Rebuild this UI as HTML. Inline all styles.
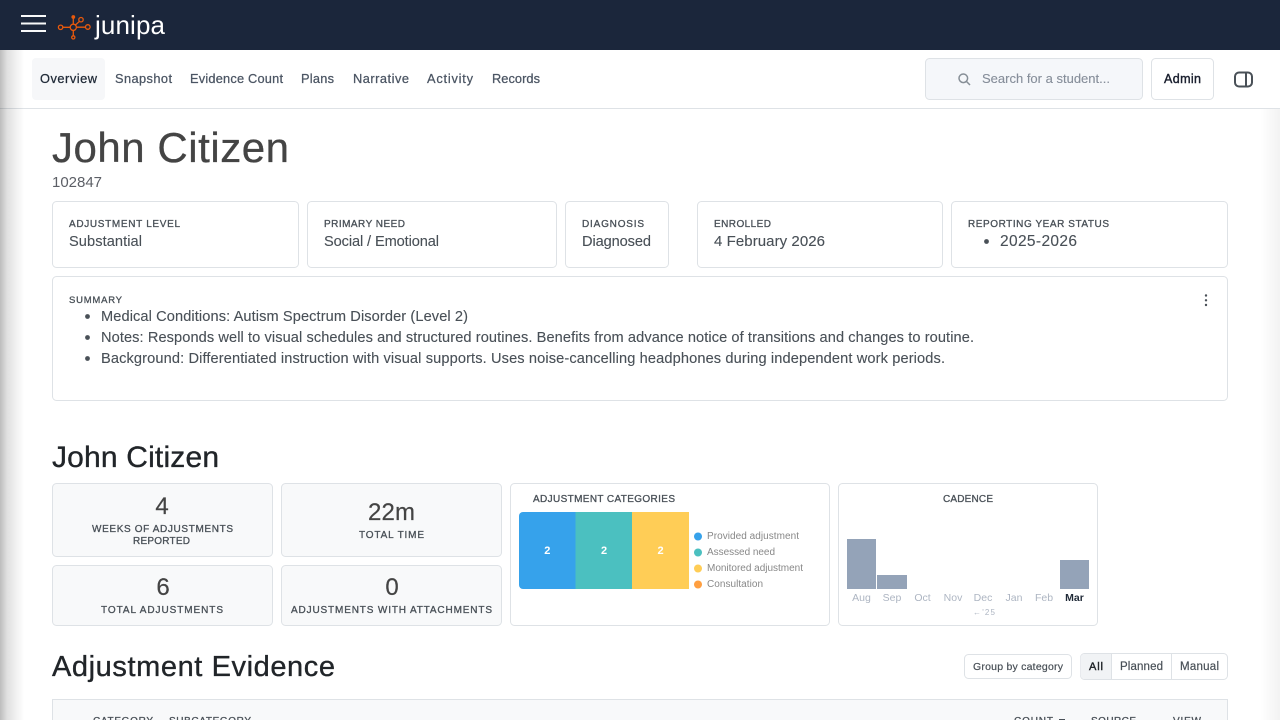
<!DOCTYPE html>
<html lang="en"><head><meta charset="utf-8"><title>John Citizen</title>
<style>
html,body{margin:0;padding:0;width:1280px;height:720px;overflow:hidden;background:#fff}
svg{display:block;font-family:"Liberation Sans",sans-serif}
.card{fill:#fff;stroke:#dee2e6;stroke-width:1}
.stat{fill:#f8f9fa;stroke:#dee2e6;stroke-width:1}
.nav{font-size:12.8px;fill:#4b5563;stroke:#4b5563;stroke-width:.25}
.lab{font-size:10px;fill:#495057;stroke:#495057;stroke-width:.3}
.val{font-size:14.6px;fill:#495057;stroke:#495057;stroke-width:.12}
.h2{font-size:30px;fill:#212529;stroke:#212529;stroke-width:.35}
.num{font-size:24px;fill:#444;stroke:#444;stroke-width:.2;text-anchor:middle}
.leg{font-size:10px;fill:#888}
.mon{font-size:10.5px;fill:#adb5c2;text-anchor:middle}
.btn{font-size:11.5px;fill:#495057;stroke:#495057;stroke-width:.2}
</style></head><body>
<svg width="1280" height="720" viewBox="0 0 1280 720" xmlns="http://www.w3.org/2000/svg">
<defs>
<linearGradient id="l" x1="0" x2="1" y1="0" y2="0"><stop offset="0" stop-color="#000" stop-opacity=".26"/><stop offset=".3" stop-color="#000" stop-opacity=".12"/><stop offset="1" stop-color="#000" stop-opacity="0"/></linearGradient>
<linearGradient id="r" x1="1" x2="0" y1="0" y2="0"><stop offset="0" stop-color="#000" stop-opacity=".05"/><stop offset="1" stop-color="#000" stop-opacity="0"/></linearGradient>
</defs>
<rect width="1280" height="720" fill="#fff"/>
<rect x="1260" y="109" width="20" height="611" fill="url(#r)"/>

<!-- header -->
<rect width="1280" height="50" fill="#1b263b"/>
<g fill="#f8f9fa"><rect x="21" y="15" width="25" height="2"/><rect x="21" y="22.500" width="25" height="2"/><rect x="21" y="30" width="25" height="2"/></g>
<g fill="none" stroke="#e8590c" stroke-width="1.300">
<circle cx="73.300" cy="27.300" r="3.100"/><circle cx="60.600" cy="27.300" r="2.200"/><circle cx="87.800" cy="27" r="2.300"/><circle cx="73.300" cy="37.400" r="1.600"/><circle cx="81" cy="19.700" r="2.200"/>
<path d="M62.800 27.300H70.200M76.400 27.200H85.500M73.300 24.200V18.500M73.300 30.400V35.800M75.400 25L79.500 21.300"/>
</g>
<circle cx="73.300" cy="17" r="1.900" fill="#e8590c"/>
<text x="95" y="34" font-size="26" fill="#fff" textLength="70">junipa</text>

<!-- nav -->
<rect y="108" width="1280" height="1" fill="#dee2e6"/>
<rect x="32" y="58" width="73" height="42" rx="4" fill="#f6f7f9"/>
<text class="nav" x="40" y="83" textLength="57" style="fill:#1f2937;stroke:#1f2937">Overview</text>
<text class="nav" x="115" y="83" textLength="57">Snapshot</text>
<text class="nav" x="190" y="83" textLength="93">Evidence Count</text>
<text class="nav" x="301" y="83" textLength="33">Plans</text>
<text class="nav" x="353" y="83" textLength="56">Narrative</text>
<text class="nav" x="427" y="83" textLength="46">Activity</text>
<text class="nav" x="492" y="83" textLength="48">Records</text>
<rect x="925.500" y="58.500" width="217" height="41" rx="4" fill="#f5f7fa" stroke="#dee2e6"/>
<g fill="none" stroke="#868e96" stroke-width="1.500"><circle cx="963.300" cy="78.300" r="4.300"/><path d="M966.500 81.500L970 85"/></g>
<text x="982" y="83" font-size="13" fill="#868e9a" stroke="#868e9a" stroke-width=".12" textLength="128">Search for a student...</text>
<rect x="1151.500" y="58.500" width="62" height="41" rx="4" fill="#fff" stroke="#dee2e6"/>
<text x="1164" y="83" font-size="12.500" fill="#1a1f2e" stroke="#1a1f2e" stroke-width=".4" textLength="37">Admin</text>
<rect x="1235" y="72.500" width="17" height="14" rx="4" fill="none" stroke="#495057" stroke-width="2"/>
<path d="M1246 72.500V86.500" stroke="#495057" stroke-width="2"/>

<!-- profile -->
<text x="52" y="162" font-size="42" fill="#444" stroke="#444" stroke-width=".3" textLength="237">John Citizen</text>
<text x="52" y="187" font-size="15" fill="#5c5f66" textLength="50">102847</text>

<rect class="card" x="52.500" y="201.500" width="246" height="66" rx="4"/>
<rect class="card" x="307.500" y="201.500" width="249" height="66" rx="4"/>
<rect class="card" x="565.500" y="201.500" width="103" height="66" rx="4"/>
<rect class="card" x="697.500" y="201.500" width="245" height="66" rx="4"/>
<rect class="card" x="951.500" y="201.500" width="276" height="66" rx="4"/>
<text class="lab" x="69" y="227" textLength="111">ADJUSTMENT LEVEL</text>
<text class="lab" x="324" y="227" textLength="81">PRIMARY NEED</text>
<text class="lab" x="582" y="227" textLength="62">DIAGNOSIS</text>
<text class="lab" x="714" y="227" textLength="57">ENROLLED</text>
<text class="lab" x="968" y="227" textLength="141">REPORTING YEAR STATUS</text>
<text class="val" x="69" y="246" textLength="73">Substantial</text>
<text class="val" x="324" y="246" textLength="115">Social / Emotional</text>
<text class="val" x="582" y="246" textLength="69">Diagnosed</text>
<text class="val" x="714" y="246" textLength="111" style="font-size:15px">4 February 2026</text>
<circle cx="986.500" cy="241.500" r="2.400" fill="#495057"/>
<text class="val" x="1000" y="246" textLength="77" style="font-size:15.500px">2025-2026</text>

<!-- summary -->
<rect class="card" x="52.500" y="276.500" width="1175" height="124" rx="4"/>
<text class="lab" x="69" y="303" textLength="53" style="font-size:9.500px">SUMMARY</text>
<g fill="#495057"><circle cx="87.500" cy="316.500" r="2.400"/><circle cx="87.500" cy="337.500" r="2.400"/><circle cx="87.500" cy="358.500" r="2.400"/></g>
<text class="val" x="101" y="321" textLength="367">Medical Conditions: Autism Spectrum Disorder (Level 2)</text>
<text class="val" x="101" y="342" textLength="873">Notes: Responds well to visual schedules and structured routines. Benefits from advance notice of transitions and changes to routine.</text>
<text class="val" x="101" y="363" textLength="844">Background: Differentiated instruction with visual supports. Uses noise-cancelling headphones during independent work periods.</text>
<g fill="#495057"><circle cx="1206" cy="295.500" r="1.200"/><circle cx="1206" cy="300.300" r="1.200"/><circle cx="1206" cy="305" r="1.200"/></g>

<!-- section -->
<text class="h2" x="52" y="467" textLength="167">John Citizen</text>
<rect class="stat" x="52.500" y="483.500" width="220" height="73" rx="4"/>
<rect class="stat" x="281.500" y="483.500" width="220" height="73" rx="4"/>
<rect class="stat" x="52.500" y="565.500" width="220" height="60" rx="4"/>
<rect class="stat" x="281.500" y="565.500" width="220" height="60" rx="4"/>
<text class="num" x="162" y="514">4</text>
<text class="lab" x="92" y="532" textLength="141">WEEKS OF ADJUSTMENTS</text>
<text class="lab" x="133" y="544" textLength="57">REPORTED</text>
<text class="num" x="368" y="520" textLength="47" style="text-anchor:start">22m</text>
<text class="lab" x="359" y="538" textLength="65">TOTAL TIME</text>
<text class="num" x="163" y="595">6</text>
<text class="lab" x="101" y="613" textLength="122">TOTAL ADJUSTMENTS</text>
<text class="num" x="392" y="595">0</text>
<text class="lab" x="291" y="613" textLength="201">ADJUSTMENTS WITH ATTACHMENTS</text>

<!-- categories -->
<rect class="card" x="510.500" y="483.500" width="319" height="142" rx="4"/>
<text class="lab" x="533" y="502" textLength="142">ADJUSTMENT CATEGORIES</text>
<path d="M523 512H575.500V589H523a4 4 0 0 1-4-4V516a4 4 0 0 1 4-4Z" fill="#36a2eb"/>
<rect x="575.500" y="512" width="57" height="77" fill="#4bc0c0"/>
<rect x="632" y="512" width="57" height="77" fill="#ffcd56"/>
<g font-size="11" font-weight="700" fill="#fff" text-anchor="middle"><text x="547.300" y="554">2</text><text x="604" y="554">2</text><text x="660.500" y="554">2</text></g>
<circle cx="698" cy="536.500" r="4" fill="#36a2eb"/><circle cx="698" cy="552.500" r="4" fill="#4bc0c0"/><circle cx="698" cy="568.500" r="4" fill="#ffcd56"/><circle cx="698" cy="584.500" r="4" fill="#ff9f40"/>
<text class="leg" x="707" y="539" textLength="92">Provided adjustment</text>
<text class="leg" x="707" y="555" textLength="68">Assessed need</text>
<text class="leg" x="707" y="571" textLength="96">Monitored adjustment</text>
<text class="leg" x="707" y="587" textLength="56">Consultation</text>

<!-- cadence -->
<rect class="card" x="838.500" y="483.500" width="259" height="142" rx="4"/>
<text class="lab" x="943" y="502" textLength="50">CADENCE</text>
<rect x="847" y="539" width="29" height="50" fill="#94a3b8"/>
<rect x="877" y="575" width="30" height="14" fill="#94a3b8"/>
<rect x="1060" y="560" width="29" height="29" fill="#94a3b8"/>
<text class="mon" x="861.500" y="601">Aug</text><text class="mon" x="892" y="601">Sep</text><text class="mon" x="922.500" y="601">Oct</text><text class="mon" x="953" y="601">Nov</text><text class="mon" x="983" y="601">Dec</text><text class="mon" x="1014" y="601">Jan</text><text class="mon" x="1044" y="601">Feb</text>
<text class="mon" x="1074.500" y="601" style="fill:#1f2937;font-weight:700">Mar</text>
<text x="973" y="615" font-size="8" fill="#adb5c2" textLength="22">←'25</text>

<!-- evidence -->
<text class="h2" x="52" y="676" textLength="283" style="font-size:29px">Adjustment Evidence</text>
<rect class="card" x="964.500" y="654.500" width="107" height="24" rx="4"/>
<text class="btn" x="973" y="670" textLength="90" style="font-size:10.500px">Group by category</text>
<rect class="card" x="1080.500" y="653.500" width="147" height="26" rx="4"/>
<path d="M1084.500 654H1111V679H1084.500a4 4 0 0 1-4-4V658a4 4 0 0 1 4-4Z" fill="#f1f3f5"/>
<rect x="1111" y="654" width="1" height="26" fill="#dee2e6"/><rect x="1171" y="654" width="1" height="26" fill="#dee2e6"/>
<text class="btn" x="1089" y="670" textLength="14" style="fill:#212529;stroke:#212529;stroke-width:.4;font-size:11px">All</text>
<text class="btn" x="1120" y="670" textLength="43">Planned</text>
<text class="btn" x="1180" y="670" textLength="39">Manual</text>

<rect class="stat" x="52.500" y="699.500" width="1175" height="40"/>
<text class="lab" x="93" y="724" textLength="60">CATEGORY</text>
<text class="lab" x="169" y="724" textLength="82">SUBCATEGORY</text>
<text class="lab" x="1014" y="724" textLength="39">COUNT</text>
<rect x="1059" y="719" width="6" height="1" fill="#495057"/>
<text class="lab" x="1091" y="724" textLength="45">SOURCE</text>
<text class="lab" x="1173" y="724" textLength="28">VIEW</text>

<rect y="50" width="24" height="670" fill="url(#l)"/>
</svg>
</body></html>
